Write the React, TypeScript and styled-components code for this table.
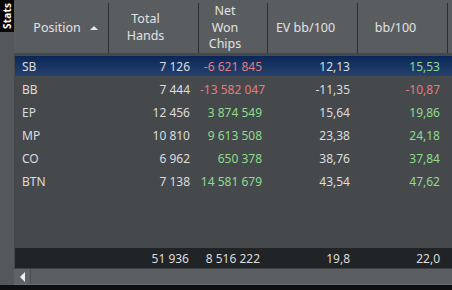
import React from 'react';
import styled, { createGlobalStyle } from 'styled-components';

const GlobalStyle = createGlobalStyle`
  html, body {
    margin: 0;
    padding: 0;
    background: #111314;
    width: 452px;
    height: 290px;
    overflow: hidden;
  }
`;

const COLS = '95px 90px 69px 90px 90px 3px';

type Tone = 'plain' | 'neg' | 'pos';

interface StatRow {
  position: string;
  hands: string;
  won: string;
  wonTone: Tone;
  ev: string;
  evTone: Tone;
  bb: string;
  bbTone: Tone;
}

const rows: StatRow[] = [
  { position: 'SB', hands: '7 126', won: '-6 621 845', wonTone: 'neg', ev: '12,13', evTone: 'plain', bb: '15,53', bbTone: 'pos' },
  { position: 'BB', hands: '7 444', won: '-13 582 047', wonTone: 'neg', ev: '-11,35', evTone: 'plain', bb: '-10,87', bbTone: 'neg' },
  { position: 'EP', hands: '12 456', won: '3 874 549', wonTone: 'pos', ev: '15,64', evTone: 'plain', bb: '19,86', bbTone: 'pos' },
  { position: 'MP', hands: '10 810', won: '9 613 508', wonTone: 'pos', ev: '23,38', evTone: 'plain', bb: '24,18', bbTone: 'pos' },
  { position: 'CO', hands: '6 962', won: '650 378', wonTone: 'pos', ev: '38,76', evTone: 'plain', bb: '37,84', bbTone: 'pos' },
  { position: 'BTN', hands: '7 138', won: '14 581 679', wonTone: 'pos', ev: '43,54', evTone: 'plain', bb: '47,62', bbTone: 'pos' },
];

const toneColor = (tone: Tone) =>
  tone === 'neg' ? '#e47b7b' : tone === 'pos' ? '#8fdb8c' : '#dcdcdc';

const Frame = styled.div`
  width: 452px;
  height: 290px;
  display: flex;
  flex-direction: column;
  font-family: 'Noto Sans', 'Open Sans', sans-serif;
  font-size: 12px;
  color: #dcdcdc;
`;

const Main = styled.div`
  flex: 1;
  display: flex;
  min-height: 0;
`;

const SideStrip = styled.div`
  width: 15px;
  background: #55585b;
  display: flex;
  flex-direction: column;
`;

const StatsTab = styled.div`
  width: 14px;
  height: 32px;
  background: #050505;
  color: #ffffff;
  font-size: 10px;
  font-weight: 700;
  writing-mode: vertical-rl;
  transform: rotate(180deg);
  display: flex;
  align-items: center;
  justify-content: center;
  letter-spacing: 0.2px;
`;

const Panel = styled.div`
  flex: 1;
  display: flex;
  flex-direction: column;
  background: #46494c;
`;

const HeaderRow = styled.div`
  display: grid;
  grid-template-columns: ${COLS};
  height: 53px;
  background: #5a5d60;
`;

const HeaderCell = styled.div<{ $last?: boolean }>`
  display: flex;
  align-items: center;
  border-right: ${p => (p.$last ? 'none' : '1px solid #2c2e30')};
  margin: 3px 0 1px;
  color: #e2e2e2;
  font-size: 12.5px;
`;

const HeaderLabel = styled.div<{ $indent?: number }>`
  flex: 1;
  text-align: center;
  line-height: 16.5px;
  padding-left: ${p => p.$indent ?? 0}px;
`;

const SortSlot = styled.div`
  width: 16px;
  display: flex;
  align-items: center;
`;

const SortArrow = styled.div`
  width: 0;
  height: 0;
  border-left: 4px solid transparent;
  border-right: 4px solid transparent;
  border-bottom: 4px solid #e6e6e6;
  margin-left: -2px;
`;

const Body = styled.div`
  flex: 1;
  display: flex;
  flex-direction: column;
  gap: 3px;
  padding-top: 3px;
`;

const DataRow = styled.div<{ $selected?: boolean }>`
  display: grid;
  grid-template-columns: ${COLS};
  height: 20px;
  align-items: center;
  margin-left: 1px;
  margin-right: 3px;
  background: ${p => (p.$selected ? 'linear-gradient(#0a2758, #26416c)' : 'transparent')};
`;

const Cell = styled.div<{ $tone?: Tone; $align?: 'left' | 'right'; $pad?: number }>`
  color: ${p => toneColor(p.$tone || 'plain')};
  text-align: ${p => p.$align || 'right'};
  padding: ${p => (p.$align === 'left' ? `0 0 0 ${p.$pad ?? 7}px` : `0 ${p.$pad ?? 9}px 0 0`)};
  white-space: nowrap;
`;

const TotalsRow = styled.div`
  display: grid;
  grid-template-columns: ${COLS};
  height: 20px;
  align-items: center;
  background: #212426;
  margin-left: 1px;
`;

const ScrollBar = styled.div`
  height: 17px;
  display: flex;
  background: #5c5f62;
  border-top: 1px solid #3e4143;
  border-bottom: 1px solid #6a6d70;
  box-sizing: border-box;
`;

const ScrollButton = styled.div`
  width: 16px;
  display: flex;
  align-items: center;
  justify-content: center;
  background: #606366;
  border-right: 1px solid #4a4d50;
`;

const LeftArrow = styled.div`
  width: 0;
  height: 0;
  border-top: 5px solid transparent;
  border-bottom: 5px solid transparent;
  border-right: 5px solid #f0f0f0;
`;

const BottomBar = styled.div`
  height: 5px;
  background: #0e0f10;
`;

export default function App() {
  return (
    <>
      <GlobalStyle />
      <Frame>
        <Main>
          <SideStrip>
            <StatsTab>Stats</StatsTab>
          </SideStrip>
          <Panel>
            <HeaderRow>
              <HeaderCell>
                <HeaderLabel $indent={8}>Position</HeaderLabel>
                <SortSlot>
                  <SortArrow />
                </SortSlot>
              </HeaderCell>
              <HeaderCell>
                <HeaderLabel>
                  Total
                  <br />
                  Hands
                </HeaderLabel>
                <SortSlot />
              </HeaderCell>
              <HeaderCell>
                <HeaderLabel>
                  Net
                  <br />
                  Won
                  <br />
                  Chips
                </HeaderLabel>
                <SortSlot />
              </HeaderCell>
              <HeaderCell>
                <HeaderLabel $indent={2}>EV bb/100</HeaderLabel>
                <SortSlot />
              </HeaderCell>
              <HeaderCell>
                <HeaderLabel $indent={2}>bb/100</HeaderLabel>
                <SortSlot />
              </HeaderCell>
              <HeaderCell $last />
            </HeaderRow>
            <Body>
              {rows.map((r, i) => (
                <DataRow key={r.position} $selected={i === 0}>
                  <Cell $align="left">{r.position}</Cell>
                  <Cell $pad={10}>{r.hands}</Cell>
                  <Cell $tone={r.wonTone} $pad={7}>{r.won}</Cell>
                  <Cell $tone={r.evTone}>{r.ev}</Cell>
                  <Cell $tone={r.bbTone}>{r.bb}</Cell>
                  <span />
                </DataRow>
              ))}
            </Body>
            <TotalsRow>
              <Cell $align="left" />
              <Cell $pad={11}>51 936</Cell>
              <Cell $pad={9}>8 516 222</Cell>
              <Cell>19,8</Cell>
              <Cell>22,0</Cell>
              <span />
            </TotalsRow>
            <ScrollBar>
              <ScrollButton>
                <LeftArrow />
              </ScrollButton>
            </ScrollBar>
          </Panel>
        </Main>
        <BottomBar />
      </Frame>
    </>
  );
}
